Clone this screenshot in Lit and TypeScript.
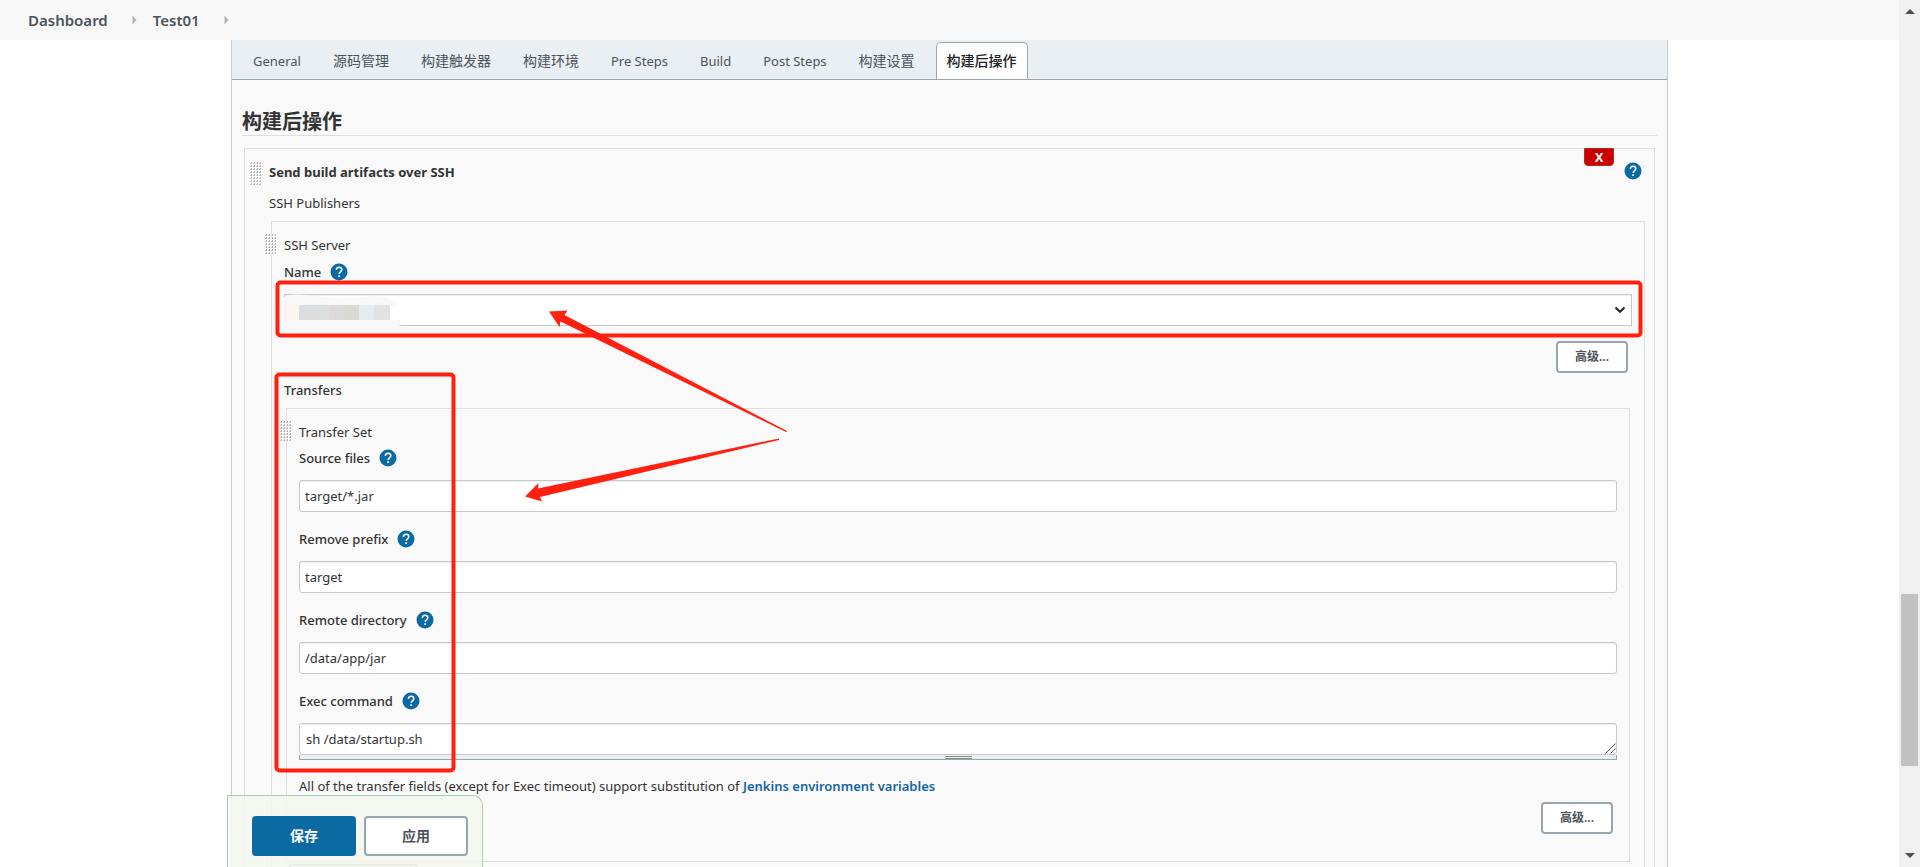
import { LitElement, html, css, svg } from "lit";
import { customElement, property, state } from "lit/decorators.js";

const FONT = css`"Noto Sans", "Noto Sans CJK SC", sans-serif`;

@customElement("help-icon")
class HelpIcon extends LitElement {
  @property() topic = "";
  static styles = css`
    :host { display: inline-flex; }
    button { display: flex; padding: 0; border: 0; background: none; cursor: pointer; }
  `;
  render() {
    return html`<button type="button" aria-label="Help for ${this.topic}">
      <svg width="18" height="18" viewBox="0 0 18 18" aria-hidden="true">
        <circle cx="9" cy="9" r="8.5" fill="#0b6aa2" />
        <path d="M6.3 6.9C6.4 5.2 7.5 4.2 9.1 4.2c1.6 0 2.7 1 2.7 2.4 0 1.1-.6 1.7-1.4 2.3-.8.6-1.2 1-1.2 2.1" fill="none" stroke="#fff" stroke-width="1.5" />
        <rect x="8.3" y="12.3" width="1.7" height="1.7" fill="#fff" />
      </svg>
    </button>`;
  }
}

@customElement("drag-grip")
class DragGrip extends LitElement {
  @property({ type: Number }) rows = 8;
  static styles = css`
    :host { display: block; cursor: move; }
    svg { display: block; }
  `;
  render() {
    const dots = [];
    for (let r = 0; r < this.rows; r++) {
      for (let c = 0; c < 4; c++) {
        dots.push(svg`<rect x=${c * 3} y=${r * 3} width="3" height="3" fill="#fff" />
          <rect x=${c * 3 + 1} y=${r * 3} width="1" height="2" fill="#b4b4b4" />
          <rect x=${c * 3} y=${r * 3 + 1} width="1" height="1" fill="#c8c8c8" />`);
      }
    }
    return html`<svg width="12" height=${this.rows * 3} aria-hidden="true">${dots}</svg>`;
  }
}

@customElement("app-root")
class AppRoot extends LitElement {
  @state() private active = 8;

  private tabs = ["General", "源码管理", "构建触发器", "构建环境", "Pre Steps", "Build", "Post Steps", "构建设置", "构建后操作"];
  private fields = [
    { id: "source", label: "Source files", value: "target/*.jar" },
    { id: "prefix", label: "Remove prefix", value: "target" },
    { id: "remote", label: "Remote directory", value: "/data/app/jar" },
  ];

  static styles = css`
    :host {
      display: flex;
      height: 100vh;
      overflow: hidden;
      position: relative;
      background: #fff;
      color: #333;
      font: 13px/20px ${FONT};
    }
    * { box-sizing: border-box; }
    button, input, select, textarea { font: inherit; color: inherit; margin: 0; }
    .page { flex: 1; min-width: 0; display: flex; flex-direction: column; }
    .crumbs {
      display: flex; align-items: center; gap: 16px; flex: none;
      height: 40px; padding: 0 28px; background: #f8f8f8;
      font-size: 15px; font-weight: 600;
    }
    .crumbs a { color: #4d545d; text-decoration: none; padding-right: 8px; }
    .main { flex: 1; min-height: 0; overflow: hidden; padding: 0 231px; }
    .panel { border: 1px solid #c8cccf; border-width: 0 1px; background: #f9f9f9; }
    .tabs {
      display: flex; align-items: flex-end; height: 40px; padding-left: 5px;
      background: #e9eff2; border-bottom: 1px solid #98a6ad;
    }
    .tab {
      height: 37px; padding: 0 16px; border: 0; background: none;
      color: #4d545d; white-space: nowrap; cursor: pointer;
    }
    .cjk { font-size: 14px; }
    .tab.active {
      margin-left: 5px; padding: 0 10px; background: #fff; color: #222;
      border: 1px solid #98a6ad; border-bottom: 0; border-radius: 5px 5px 0 0; font-weight: 500;
    }
    .content { padding: 28px 10px 0; }
    h2 {
      margin: 0 0 12px; border-bottom: 1px solid #dcdfe0;
      font-size: 20px; line-height: 27px; font-weight: 700;
    }
    .box { position: relative; border: 1px solid #dcdfe0; }
    .outer { margin: 0 2px; padding: 13px 9px 60px 24px; }
    .server { margin: 8px 0 0 2px; padding: 13px 12px 40px; }
    .set { margin: 8px 2px 0; padding: 13px 12px 27px; }
    drag-grip { position: absolute; }
    .outer > drag-grip { left: 5px; top: 13px; }
    .server > drag-grip, .set > drag-grip { left: -7px; top: 12px; }
    .title { font-weight: 700; }
    .sub { margin-top: 11px; }
    .label { display: flex; align-items: center; gap: 9px; height: 20px; margin-bottom: 12px; font-weight: 500; }
    .name { margin-top: 7px; }
    .first { margin-top: 6px; }
    .field + .field { margin-top: 17px; }
    .strong { font-weight: 500; }
    .delete {
      position: absolute; top: -1px; right: 40px; width: 30px; height: 18px; padding: 0;
      border: 1px solid #b52b1e; border-radius: 0 0 4px 4px; background: #c00;
      color: #fff; font-weight: 700; line-height: 14px;
    }
    .help { position: absolute; top: 13px; right: 12px; }
    .input {
      display: block; width: 100%; height: 32px; padding: 5px; background: #fff;
      border: 1px solid #c6c8ca; border-radius: 3px; box-shadow: inset 0 1px 1px #0001;
    }
    .pick { position: relative; display: flex; align-items: center; }
    .pick select { appearance: none; border-radius: 0; }
    .chev { position: absolute; right: 6px; pointer-events: none; }
    .mosaic { position: absolute; left: 0; top: 0; pointer-events: none; }
    textarea.input { resize: none; overflow: hidden; padding: 5px 6px; }
    .area { position: relative; }
    .corner { position: absolute; right: 1px; top: 20px; }
    .handle {
      display: flex; flex-direction: column; align-items: center; gap: 1px; height: 5px; padding-top: 1px;
      background: #e9eff2; border: 1px solid #98a6ad; border-top: 0;
    }
    .handle i { width: 27px; height: 1px; background: #888d88; }
    .note { margin-top: 16px; }
    .note a { color: #1565a0; font-weight: 600; text-decoration: none; }
    .actions { display: flex; justify-content: flex-end; padding-right: 4px; }
    .actions.top { margin: 15px 0 7px; }
    .actions.low { margin-top: 6px; }
    .btn {
      height: 32px; width: 72px; padding: 0; border: 2px solid #98a6ad; border-radius: 4px;
      background: #fff; color: #4d545d; font-size: 12px; font-weight: 600;
    }
    .more { display: block; width: 130px; margin: 2px 0 0 4px; }
    .sticky {
      position: absolute; left: 227px; bottom: 0; display: flex; gap: 8px;
      padding: 20px 14px 11px 24px;
      border: 1px solid #a8cdb9; border-bottom: 0; border-radius: 0 10px 0 0;
      background: rgba(245, 248, 240, 0.85);
    }
    .big { width: 104px; height: 40px; font-size: 14px; }
    .primary { background: #0b6aa2; border-color: #0b6aa2; color: #fff; font-weight: 700; }
    .bar {
      flex: none; width: 21px; display: flex; flex-direction: column; align-items: center;
      justify-content: space-between; padding: 9px 0; background: #f0f0f0; position: relative;
    }
    .thumb { position: absolute; left: 2px; right: 2px; top: 68.5%; height: 172px; background: #c1c1c1; }
    .marks { position: absolute; left: 0; top: 0; pointer-events: none; }
  `;

  private crumbArrow() {
    return html`<svg width="5" height="10" viewBox="0 0 5 10" aria-hidden="true"><path d="M0.5 0.5L4.5 5L0.5 9.5Z" fill="#b0b4b6" /></svg>`;
  }

  render() {
    const blocks = ["#faf7f1", "#dcdde0", "#dddee0", "#dbd9da", "#d8d9d3", "#e8ebee", "#e2e2e2"];
    return html`
      <div class="page">
        <nav class="crumbs" aria-label="Breadcrumb">
          <a href="#">Dashboard</a>${this.crumbArrow()}<a href="#">Test01</a>${this.crumbArrow()}
        </nav>
        <main class="main">
          <div class="panel">
            <div class="tabs" role="tablist">
              ${this.tabs.map((t, i) => html`<button type="button" role="tab" aria-selected=${i === this.active}
                class="tab ${/[a-z]/.test(t) ? "" : "cjk"} ${i === this.active ? "active" : ""}"
                @click=${() => (this.active = i)}>${t}</button>`)}
            </div>
            <div class="content">
              <h2>构建后操作</h2>
              <section class="box outer">
                <drag-grip></drag-grip>
                <button type="button" class="delete" aria-label="Delete">X</button>
                <help-icon class="help" topic="Send build artifacts over SSH"></help-icon>
                <div class="title">Send build artifacts over SSH</div>
                <div class="sub">SSH Publishers</div>
                <section class="box server">
                  <drag-grip rows="7"></drag-grip>
                  <div>SSH Server</div>
                  <div class="label name"><label for="server">Name</label><help-icon topic="Name"></help-icon></div>
                  <div class="pick">
                    <select class="input" id="server"><option></option></select>
                    <svg class="mosaic" width="120" height="42" viewBox="0 0 120 42" aria-hidden="true">
                      <path d="M0 3C12 -2 20 2 40 3C60 6 75 3 90 2C104 3 112 7 114 12H106V26H118Q116 33 112 35C90 41 30 38 0 36Z" fill="#f8f8f8" />
                      ${blocks.map((c, i) => svg`<rect x=${i * 15} y="11" width="16" height="15" fill=${c} />`)}
                    </svg>
                    <svg class="chev" width="12" height="8" viewBox="0 0 12 8" aria-hidden="true"><path d="M1.5 1.5L6 5.8L10.5 1.5" fill="none" stroke="#222" stroke-width="2" /></svg>
                  </div>
                  <div class="actions top"><button type="button" class="btn">高级...</button></div>
                  <div class="strong">Transfers</div>
                  <section class="box set">
                    <drag-grip rows="7"></drag-grip>
                    <div>Transfer Set</div>
                    ${this.fields.map((f, i) => html`<div class="field ${i === 0 ? "first" : ""}">
                      <div class="label"><label for=${f.id}>${f.label}</label><help-icon topic=${f.label}></help-icon></div>
                      <input class="input" id=${f.id} type="text" .value=${f.value} />
                    </div>`)}
                    <div class="field">
                      <div class="label"><label for="exec">Exec command</label><help-icon topic="Exec command"></help-icon></div>
                      <div class="area">
                        <textarea class="input" id="exec" rows="1" .value=${"sh /data/startup.sh"}></textarea>
                        <svg class="corner" width="11" height="11" viewBox="0 0 11 11" aria-hidden="true"><path d="M0.5 10.5L10.5 0.5M5.5 10.5L10.5 5.5" stroke="#555" fill="none" /></svg>
                        <div class="handle"><i></i><i></i></div>
                      </div>
                    </div>
                    <div class="note">All of the transfer fields (except for Exec timeout) support substitution of <a href="#">Jenkins environment variables</a></div>
                    <div class="actions low"><button type="button" class="btn">高级...</button></div>
                  </section>
                  <button type="button" class="btn more" aria-label="Add transfer set"></button>
                </section>
              </section>
            </div>
          </div>
        </main>
      </div>
      <div class="bar" aria-hidden="true">
        <svg width="10" height="5" viewBox="0 0 10 5"><path d="M0 5L5 0L10 5Z" fill="#505050" /></svg>
        <span class="thumb"></span>
        <svg width="10" height="5" viewBox="0 0 10 5"><path d="M0 0L5 5L10 0Z" fill="#505050" /></svg>
      </div>
      <div class="sticky">
        <button type="button" class="btn big primary">保存</button>
        <button type="button" class="btn big">应用</button>
      </div>
      <svg class="marks" width="1920" height="867" viewBox="0 0 1920 867" aria-hidden="true">
        <g fill="none" stroke="#ff2010" stroke-width="4">
          <rect x="277.5" y="282.5" width="1363" height="53" rx="3" />
          <rect x="276.5" y="374.5" width="177" height="396" rx="3" />
        </g>
        <g fill="#ff2010">
          <path d="M549 311.5L567.5 310.5L564.5 315L787 431L786 432L560.5 321.5L559.5 327Z" />
          <path d="M525 496.5L538.5 483L538 488.5L779 438.5V440L540 497L542 501.5Z" />
        </g>
      </svg>
    `;
  }
}
